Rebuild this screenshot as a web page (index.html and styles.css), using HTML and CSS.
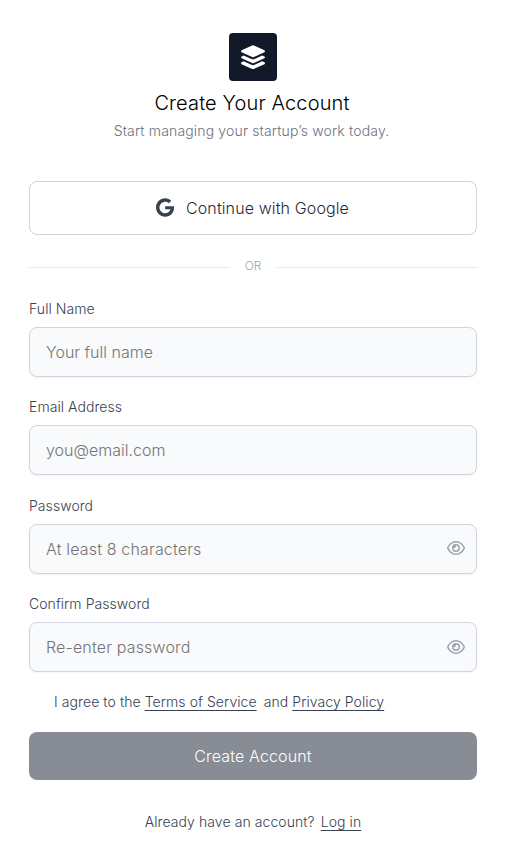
FILE: index.html
```html
<!DOCTYPE html>
<html lang="en">
<head>
<meta charset="utf-8">
<title>Create Your Account</title>
<link rel="stylesheet" href="styles.css">
</head>
<body>
<main class="page">
  <header class="header">
    <div class="logo">
      <svg viewBox="0 0 24 24" width="24" height="24" fill="#fff"><path d="M.6 5.300 11.200.5a2 2 0 0 1 1.600 0L23.400 5.300c.8.400.8 1.500 0 1.900L12.800 12a2 2 0 0 1-1.600 0L.6 7.200c-.8-.4-.8-1.500 0-1.900Z"/><path d="m2.700 10.400 7.700 3.500a4 4 0 0 0 3.200 0l7.700-3.500 2.100 1c.8.400.8 1.500 0 1.900L12.800 18a2 2 0 0 1-1.600 0L.6 13.300c-.8-.4-.8-1.500 0-1.900Z"/><path d="m2.700 16.300 7.700 3.500a4 4 0 0 0 3.200 0l7.700-3.500 2.100 1c.8.400.8 1.500 0 1.900l-10.600 4.700a2 2 0 0 1-1.600 0L.6 19.200c-.8-.4-.8-1.500 0-1.900Z"/></svg>
    </div>
    <h1 class="title">Create Your Account</h1>
    <p class="subtitle">Start managing your startup’s work today.</p>
  </header>
  <button class="google" type="button">
    <svg class="google-icon" viewBox="0 0 488 512" width="18" height="19"><path d="M488 261.800C488 403.300 391.100 504 248 504 110.800 504 0 393.200 0 256S110.800 8 248 8c66.800 0 123 24.500 166.300 64.900l-67.500 64.900C258.500 52.600 94.300 116.600 94.300 256c0 86.500 69.100 156.600 153.700 156.600 98.200 0 135-70.400 140.800-106.900H248v-85.300h236.100c2.300 12.700 3.900 24.900 3.900 41.400z"/></svg>
    <span>Continue with Google</span>
  </button>
  <div class="divider"><span>OR</span></div>
  <form class="form">
    <label class="field"><span class="label">Full Name</span><input class="input" type="text" placeholder="Your full name"></label>
    <label class="field"><span class="label">Email Address</span><input class="input" type="email" placeholder="you@email.com"></label>
    <label class="field"><span class="label">Password</span><span class="control"><input class="input secret" type="password" placeholder="At least 8 characters"><svg class="eye" viewBox="0 0 576 512" width="18" height="16"><path d="M288 80c-65.200 0-118.800 29.600-159.900 67.700C89.600 183.500 63 226 49.400 256c13.600 30 40.200 72.500 78.600 108.300C169.200 402.400 222.800 432 288 432s118.800-29.600 159.900-67.700C486.400 328.500 513 286 526.600 256c-13.600-30-40.200-72.500-78.600-108.300C406.800 109.600 353.200 80 288 80zM95.400 112.600C142.500 68.800 207.200 32 288 32s145.500 36.800 192.600 80.600c46.800 43.500 78.100 95.400 93 131.100 3.300 7.900 3.300 16.700 0 24.600-14.900 35.700-46.200 87.700-93 131.100C433.500 443.200 368.800 480 288 480s-145.500-36.800-192.600-80.600C48.600 356 17.300 304 2.500 268.300c-3.300-7.900-3.300-16.700 0-24.600C17.300 208 48.600 156 95.400 112.600zM288 336c44.200 0 80-35.800 80-80s-35.800-80-80-80h-2c1.300 5.100 2 10.500 2 16 0 35.300-28.700 64-64 64-5.500 0-10.900-.7-16-2v2c0 44.200 35.800 80 80 80zm0-208a128 128 0 1 1 0 256 128 128 0 1 1 0-256z"/></svg></span></label>
    <label class="field"><span class="label">Confirm Password</span><span class="control"><input class="input secret" type="password" placeholder="Re-enter password"><svg class="eye" viewBox="0 0 576 512" width="18" height="16"><path d="M288 80c-65.200 0-118.800 29.600-159.900 67.700C89.600 183.500 63 226 49.400 256c13.600 30 40.200 72.500 78.600 108.300C169.200 402.400 222.800 432 288 432s118.800-29.600 159.900-67.700C486.400 328.500 513 286 526.600 256c-13.600-30-40.200-72.500-78.600-108.300C406.800 109.600 353.200 80 288 80zM95.400 112.600C142.500 68.800 207.200 32 288 32s145.500 36.800 192.600 80.600c46.800 43.500 78.100 95.400 93 131.100 3.300 7.900 3.300 16.700 0 24.600-14.900 35.700-46.200 87.700-93 131.100C433.500 443.200 368.800 480 288 480s-145.500-36.800-192.600-80.600C48.600 356 17.300 304 2.500 268.300c-3.300-7.900-3.300-16.700 0-24.600C17.300 208 48.600 156 95.400 112.600zM288 336c44.200 0 80-35.800 80-80s-35.800-80-80-80h-2c1.300 5.100 2 10.500 2 16 0 35.300-28.700 64-64 64-5.500 0-10.900-.7-16-2v2c0 44.200 35.800 80 80 80zm0-208a128 128 0 1 1 0 256 128 128 0 1 1 0-256z"/></svg></span></label>
    <p class="terms">I agree to the <a class="link" href="#">Terms of Service</a><span class="and">and</span><a class="link" href="#">Privacy Policy</a></p>
    <button class="submit" type="button">Create Account</button>
  </form>
  <p class="login">Already have an account?<a class="link login-link" href="#">Log in</a></p>
</main>
</body>
</html>
```
FILE: styles.css
```css
* { box-sizing: border-box; }
body { margin: 0; background: #fff; font-family: Inter, sans-serif; font-weight: 360; color: #374151; }
h1, p { margin: 0; font-weight: 360; }
.page { width: 506px; height: 863px; padding: 33px 29px 0; }
.header { display: flex; flex-direction: column; align-items: center; }
.logo { display: flex; align-items: center; justify-content: center; width: 48px; height: 48px; padding-bottom: 1px; background: #111827; border-radius: 4px; }
.title { margin-top: 8px; padding-right: 2px; font-size: 20px; line-height: 28px; letter-spacing: .14px; color: #000; }
.subtitle { margin-top: 4px; padding-right: 3px; font-size: 14px; line-height: 20px; letter-spacing: .16px; color: #6b7280; }
.google { display: flex; align-items: center; justify-content: center; gap: 12px; width: 100%; height: 54px; margin-top: 40px; padding: 0 1px 0 0; border: 1px solid #d1d5db; border-radius: 8px; background: #fff; font: 360 16px/24px Inter, sans-serif; letter-spacing: .12px; color: #1f2937; }
.google-icon { margin-top: -2px; fill: #374151; }
.divider { display: flex; align-items: center; gap: 16px; height: 16px; margin-top: 24px; font-size: 12px; line-height: 16px; color: #9ca3af; }
.divider span { margin-top: -2px; }
.divider::before, .divider::after { content: ""; flex: 1; height: 1px; background: #e5e7eb; }
.form { margin-top: 24px; }
.field { display: block; height: 98.3px; }
.label { display: block; height: 28px; font-size: 14px; line-height: 20px; letter-spacing: .06px; }
.control { display: block; position: relative; }
.input { display: block; width: 100%; height: 50px; padding: 0 16px; border: 1px solid #d1d5db; border-radius: 8px; background: #f9fafb; box-shadow: 0 1px 2px rgba(0,0,0,.05); font: 360 16px/24px Inter, sans-serif; }
.secret { letter-spacing: .16px; }
.input::placeholder { color: #757575; opacity: 1; }
.eye { position: absolute; right: 12px; top: 16.7px; fill: #9ca3af; }
.terms { padding-left: 25px; font-size: 14px; line-height: 20px; letter-spacing: .08px; }
.link { color: #374151; text-decoration: underline; text-decoration-thickness: 1px; text-decoration-skip-ink: none; text-underline-offset: 3px; }
.and { margin: 0 4px 0 7px; }
.submit { display: block; width: 100%; height: 48px; margin-top: 20px; border: 0; border-radius: 8px; background: #888c94; color: #fff; font: 360 16px/24px Inter, sans-serif; letter-spacing: .14px; }
.login { margin-top: 32px; text-align: center; font-size: 14px; line-height: 20px; letter-spacing: .08px; }
.login-link { margin-left: 6px; }
```
